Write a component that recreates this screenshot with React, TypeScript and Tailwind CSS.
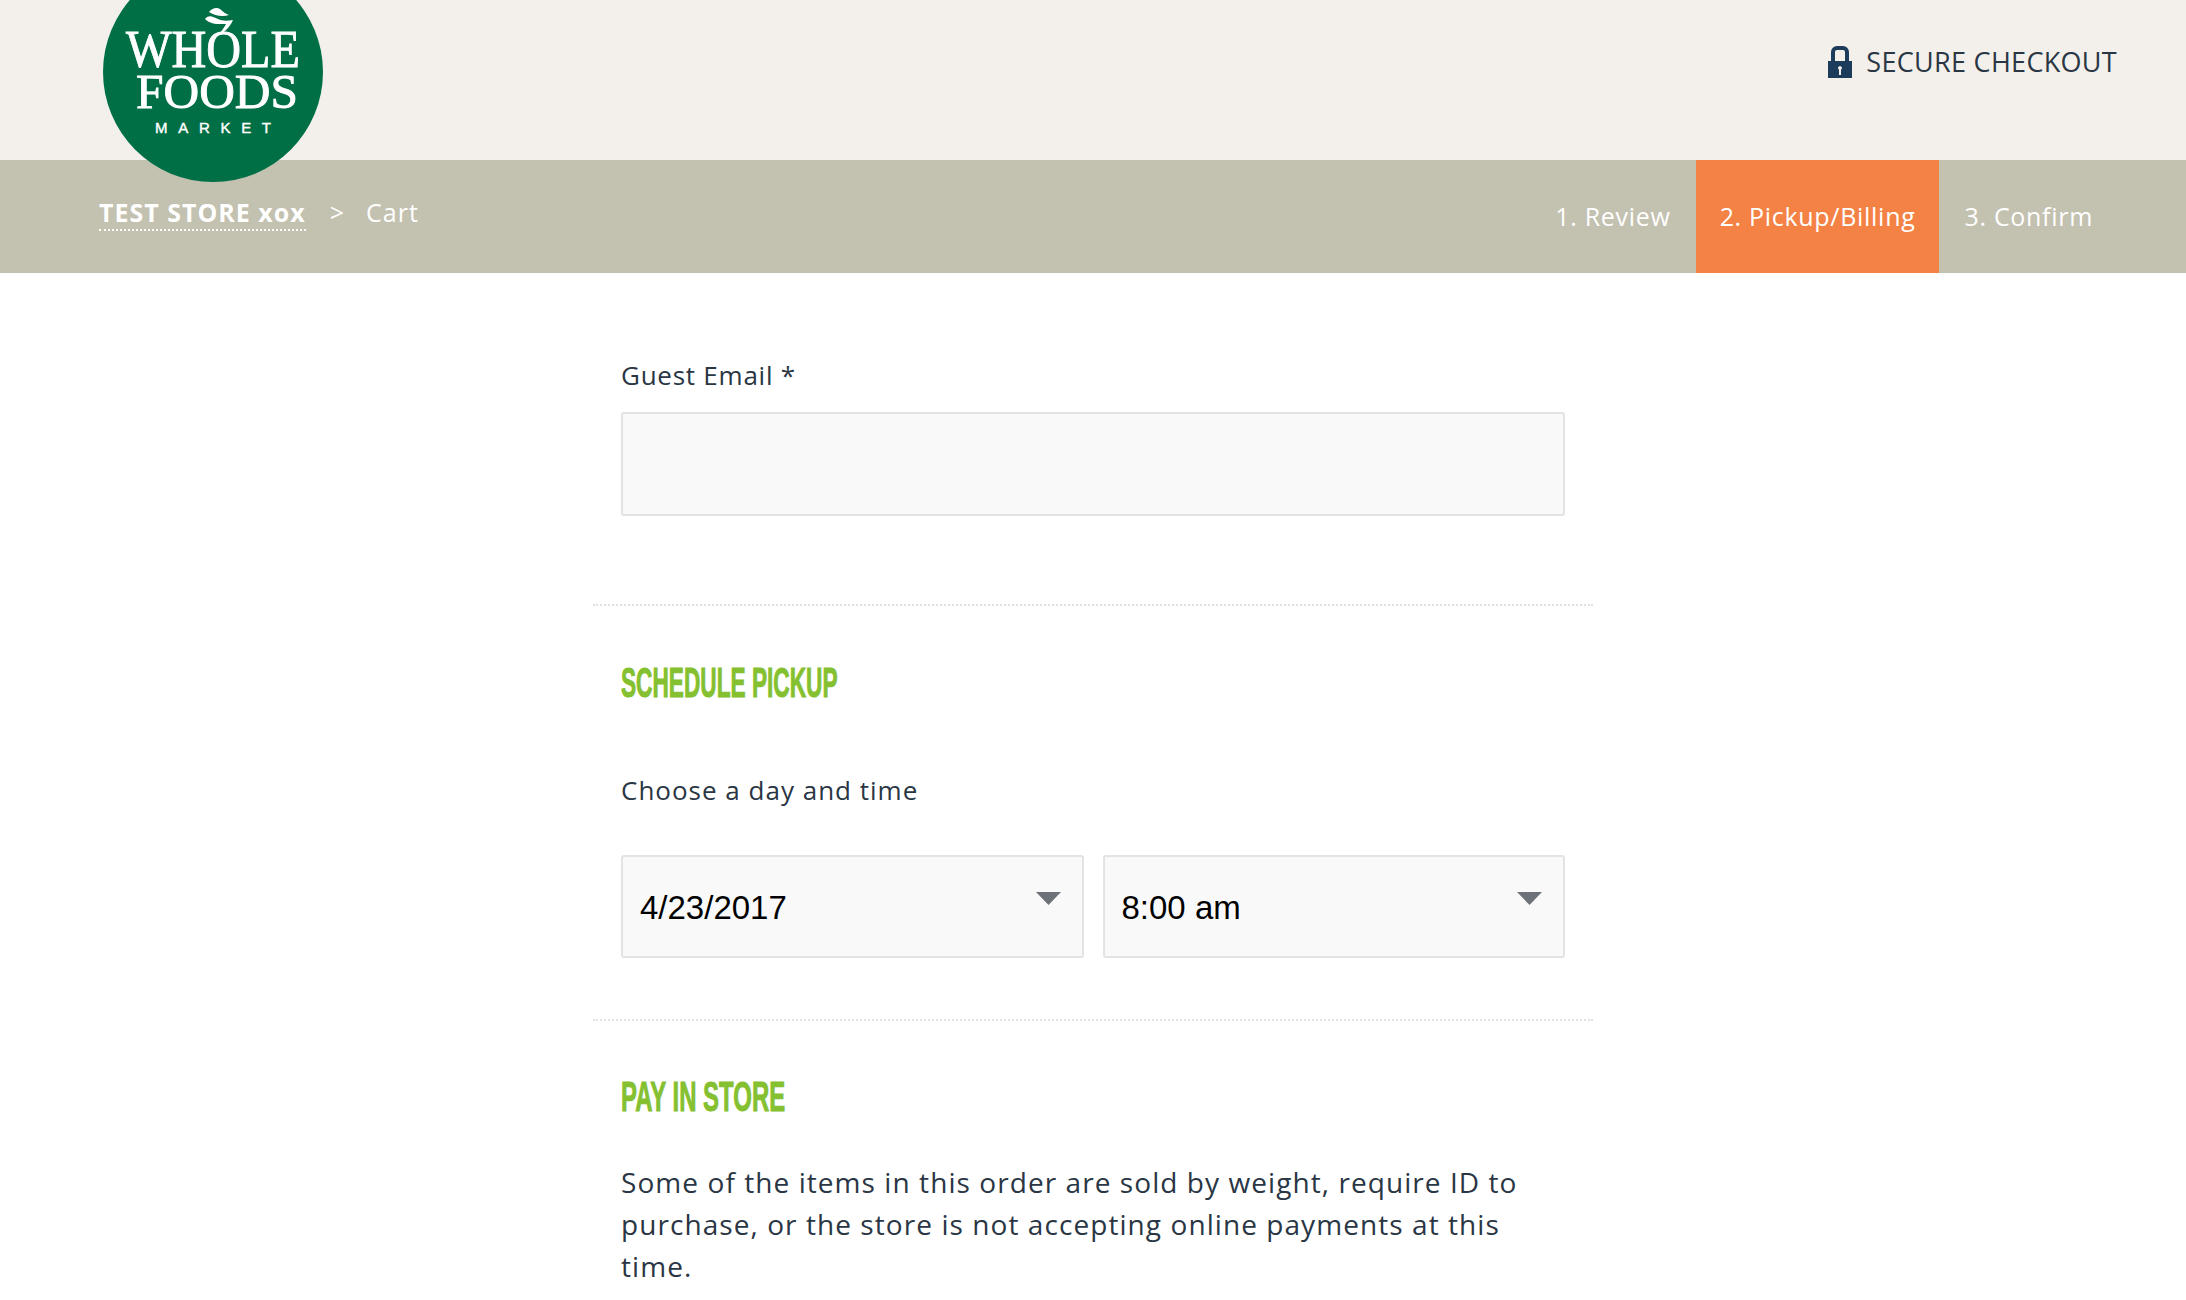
import React from "react";

const Logo = () => (
  <svg viewBox="0 0 220 220" className="absolute left-[103px] top-[-38px] h-[220px] w-[220px]">
    <circle cx="110" cy="110" r="110" fill="#006f46" />
    <path d="M106 50C109 46 114 45 117 47C120 50 123 52 126 53C120 55 112 54 106 50Z" fill="#fff" />
    <path d="M102 57C106 52 110 55 115 57C119 59 124 59 130 58C128 63 124 68 119 71C118 72 117 71 117 71C120 67 122 64 123 62C116 62 108 63 102 57Z" fill="#fff" />
    <text x="110" y="105" textAnchor="middle" textLength="174" lengthAdjust="spacingAndGlyphs" fill="#fff" stroke="#fff" strokeWidth="0.9" fontFamily="'Liberation Serif', serif" fontSize="52">WHOLE</text>
    <text x="114" y="146" textAnchor="middle" textLength="162" lengthAdjust="spacingAndGlyphs" fill="#fff" stroke="#fff" strokeWidth="0.9" fontFamily="'Liberation Serif', serif" fontSize="49">FOODS</text>
    <text x="110" y="171" textAnchor="middle" textLength="116" fill="#fff" stroke="#fff" strokeWidth="0.4" fontFamily="'Liberation Sans', sans-serif" fontSize="15">MARKET</text>
  </svg>
);

const Lock = () => (
  <svg viewBox="0 0 24 32" className="h-[32px] w-[24px] shrink-0">
    <path d="M5 16V6a4 4 0 0 1 4-4h6a4 4 0 0 1 4 4v10" fill="none" stroke="#1d3c5c" strokeWidth="4" />
    <path d="M0 15h24v17H0z" fill="#1d3c5c" />
    <path d="M12 20a2 2 0 0 1 1 3.700V29h-2v-5.300A2 2 0 0 1 12 20z" fill="#f3f0eb" />
  </svg>
);

const Caret = () => (
  <svg viewBox="0 0 25 13" className="absolute right-[21px] top-[35px] h-[13px] w-[25px]">
    <path d="M0 0h25L12.500 13z" fill="#6d7278" />
  </svg>
);

const Dropdown = ({ value }: { value: string }) => (
  <div className="relative flex h-[103px] flex-1 items-center rounded-[3px] border-2 border-[#e3e3e3] bg-[#f9f9f9] pl-[17px] pt-[2px] font-['Liberation_Sans',sans-serif] text-[33px] text-black">
    {value}
    <Caret />
  </div>
);

const Divider = () => <div className="border-t-2 border-dotted border-[#e2e2e2]" />;

export default function App() {
  return (
    <div className="min-h-[1300px] overflow-hidden bg-white font-['Open_Sans',sans-serif] text-[#2a3644]">
      <header className="relative flex h-[160px] items-start justify-end bg-[#f3f0eb] pr-[69px] pt-[46px]">
        <Logo />
        <div className="flex items-center gap-[14px] text-[27px] leading-[32px]">
          <Lock />
          <span className="tracking-[0.300px]">SECURE CHECKOUT</span>
        </div>
      </header>

      <nav className="flex h-[113px] items-stretch justify-between bg-[#c3c1b0] pr-[68px] text-[25px] text-white">
        <div className="flex items-start pl-[99px] pt-[35px] leading-[34px] tracking-[1px]">
          <a className="border-b-2 border-dotted border-white font-bold">TEST STORE xox</a>
          <span className="ml-[24px]">&gt;</span>
          <span className="ml-[21px]">Cart</span>
        </div>
        <ol className="flex items-stretch tracking-[0.700px]">
          <li className="flex items-center px-[25px]">1. Review</li>
          <li className="flex items-center bg-[#f48245] px-[24px]">2. Pickup/Billing</li>
          <li className="flex items-center px-[25px]">3. Confirm</li>
        </ol>
      </nav>

      <main className="mx-auto w-[1000px]">
        <section className="px-[28px] pb-[88px] pt-[84px]">
          <label className="block text-[26px] leading-[36px] tracking-[0.750px]">Guest Email *</label>
          <input className="mt-[19px] block h-[104px] w-full rounded-[3px] border-2 border-[#e3e3e3] bg-[#f9f9f9]" />
        </section>
        <Divider />
        <section className="px-[28px] pb-[61px] pt-[54px]">
          <h2 className="origin-left scale-x-[0.527] whitespace-nowrap font-['Liberation_Sans',sans-serif] text-[43px] font-bold leading-[44px] text-[#84c02f] [-webkit-text-stroke:1px_#84c02f]">
            SCHEDULE PICKUP
          </h2>
          <p className="mt-[68px] text-[26px] leading-[36px] tracking-[1px]">Choose a day and time</p>
          <div className="mt-[47px] flex gap-[19px]">
            <Dropdown value="4/23/2017" />
            <Dropdown value="8:00 am" />
          </div>
        </section>
        <Divider />
        <section className="px-[28px] pt-[53px]">
          <h2 className="origin-left scale-x-[0.557] whitespace-nowrap font-['Liberation_Sans',sans-serif] text-[43px] font-bold leading-[44px] text-[#84c02f] [-webkit-text-stroke:1px_#84c02f]">
            PAY IN STORE
          </h2>
          <p className="mt-[43px] text-[28px] leading-[42px] tracking-[1.070px]">
            Some of the items in this order are sold by weight, require ID to purchase, or the store is not accepting online payments at this time.
          </p>
        </section>
      </main>
    </div>
  );
}
